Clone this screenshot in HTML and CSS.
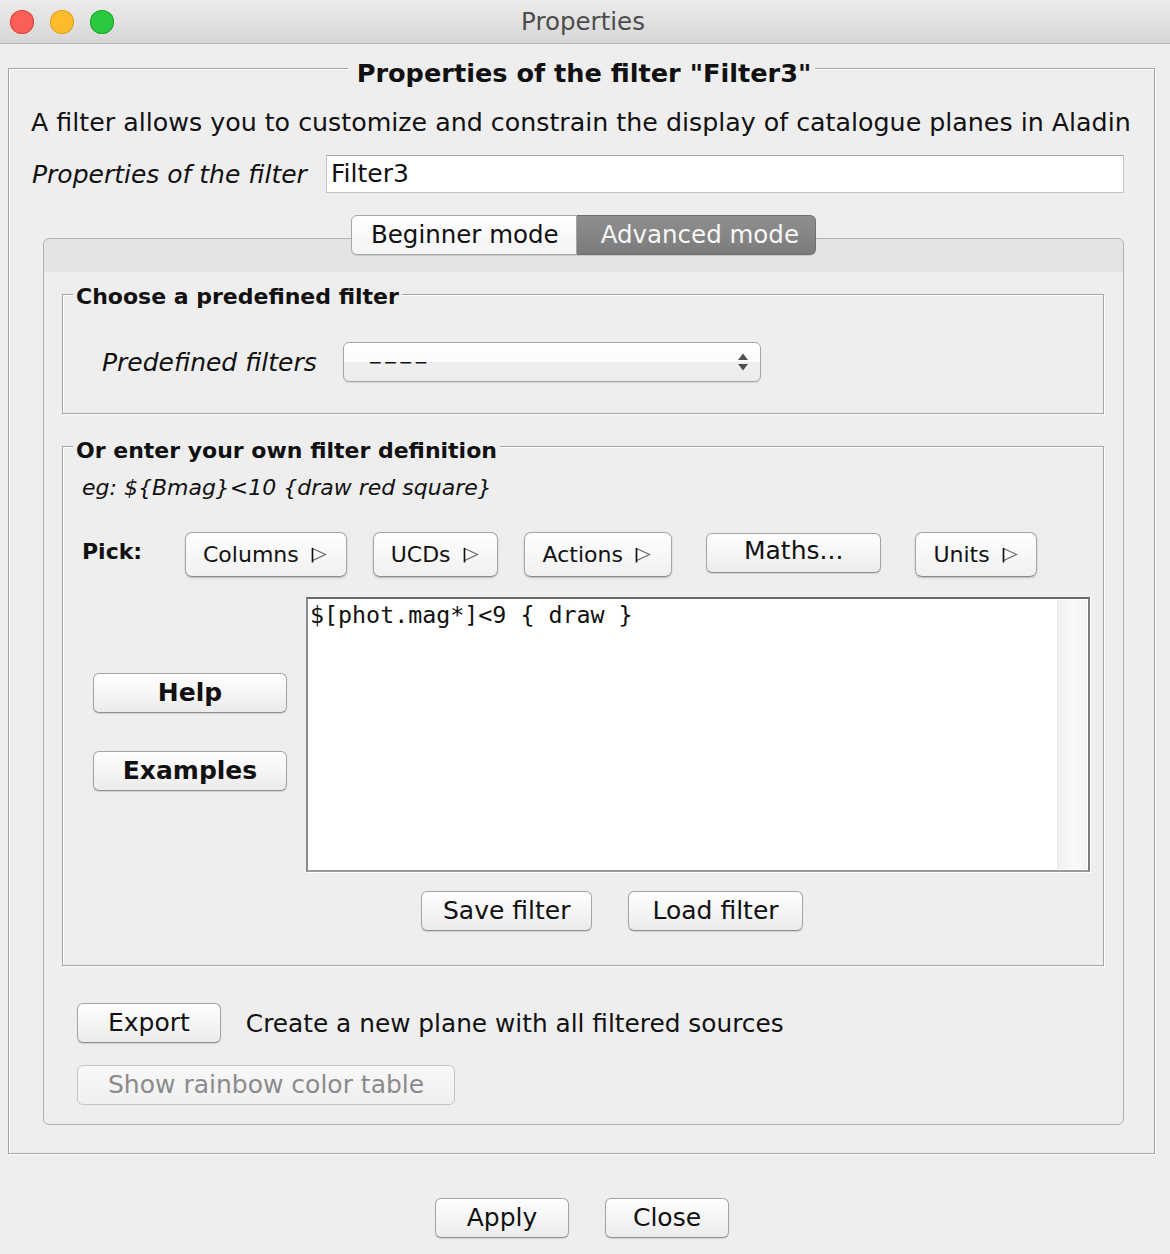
FILE: index.html
```html
<!DOCTYPE html>
<html>
<head>
<meta charset="utf-8">
<title>Properties</title>
<link rel="stylesheet" href="styles.css">
</head>
<body>
<header class="titlebar">
  <div class="lights"><span class="light red"></span><span class="light yellow"></span><span class="light green"></span></div>
  <div class="wintitle">Properties</div>
  <div></div>
</header>

<section class="frame">
  <h1 class="frame-title">Properties of the filter "Filter3"</h1>
  <div class="frame-body">
    <p class="desc">A filter allows you to customize and constrain the display of catalogue planes in Aladin</p>
    <div class="name-row">
      <span class="name-label">Properties of the filter</span>
      <div class="textfield">Filter3</div>
    </div>

    <div class="tabpane">
      <div class="tabs">
        <span class="tab tab-first">Beginner mode</span>
        <span class="tab tab-active">Advanced mode</span>
      </div>
      <div class="panel">
        <div class="group g1">
          <h2 class="group-title t1">Choose a predefined filter</h2>
          <div class="predef-row">
            <span class="predef-label">Predefined filters</span>
            <div class="combo">
              <span class="combo-value">−−−−</span>
              <svg class="combo-arrows" width="12" height="24" viewBox="0 0 12 24"><path d="M6 3.5 L11 10 L1 10 Z" fill="#4f4f4f"/><path d="M6 20.5 L11 14 L1 14 Z" fill="#4f4f4f"/></svg>
            </div>
          </div>
        </div>

        <div class="group g2">
          <h2 class="group-title t2">Or enter your own filter definition</h2>
          <div class="eg">eg: ${Bmag}&lt;10 {draw red square}</div>
          <div class="pick-row">
            <span class="pick-label">Pick:</span>
            <button class="pbtn columns">Columns <svg class="tri" width="18" height="17" viewBox="0 0 18 17"><path d="M2.5 2.5 L15.5 8.5 L2.5 14.5 Z" fill="#fdfdfd" stroke="#6a6a6a" stroke-width="1.2"/><path d="M2.5 2 L2.5 16.5" stroke="#111" stroke-width="1.6"/></svg></button>
            <button class="pbtn">UCDs <svg class="tri" width="18" height="17" viewBox="0 0 18 17"><path d="M2.5 2.5 L15.5 8.5 L2.5 14.5 Z" fill="#fdfdfd" stroke="#6a6a6a" stroke-width="1.2"/><path d="M2.5 2 L2.5 16.5" stroke="#111" stroke-width="1.6"/></svg></button>
            <button class="pbtn actions">Actions <svg class="tri" width="18" height="17" viewBox="0 0 18 17"><path d="M2.5 2.5 L15.5 8.5 L2.5 14.5 Z" fill="#fdfdfd" stroke="#6a6a6a" stroke-width="1.2"/><path d="M2.5 2 L2.5 16.5" stroke="#111" stroke-width="1.6"/></svg></button>
            <button class="btn maths">Maths...</button>
            <button class="pbtn units">Units <svg class="tri" width="18" height="17" viewBox="0 0 18 17"><path d="M2.5 2.5 L15.5 8.5 L2.5 14.5 Z" fill="#fdfdfd" stroke="#6a6a6a" stroke-width="1.2"/><path d="M2.5 2 L2.5 16.5" stroke="#111" stroke-width="1.6"/></svg></button>
          </div>
          <div class="edit-row">
            <div class="side">
              <button class="btn bold">Help</button>
              <button class="btn bold">Examples</button>
            </div>
            <div class="editor">
              <div class="code">$[phot.mag*]&lt;9 { draw }</div>
              <div class="scroll"></div>
            </div>
          </div>
          <div class="io-row">
            <button class="btn io">Save filter</button>
            <button class="btn io load">Load filter</button>
          </div>
        </div>

        <div class="export-row">
          <button class="btn export">Export</button>
          <span class="export-text">Create a new plane with all filtered sources</span>
        </div>
        <button class="btn rainbow" disabled>Show rainbow color table</button>
      </div>
    </div>
  </div>
</section>

<div class="dialog-buttons">
  <button class="btn apply">Apply</button>
  <button class="btn close">Close</button>
</div>
</body>
</html>
```

FILE: styles.css
```css
* { box-sizing: border-box; }
html, body { margin: 0; padding: 0; }
body {
  width: 1170px;
  height: 1254px;
  overflow: hidden;
  background: #eeeeee;
  font-family: "DejaVu Sans", "Liberation Sans", sans-serif;
  font-size: 25px;
  color: #111111;
}

/* title bar */
.titlebar {
  height: 44px;
  display: grid;
  grid-template-columns: 1fr auto 1fr;
  align-items: center;
  background: linear-gradient(#ececec, #d6d6d6);
  border-bottom: 1px solid #b4b4b4;
}
.lights { display: flex; gap: 16px; padding-left: 10px; }
.light { width: 24px; height: 24px; border-radius: 50%; display: block; }
.red { background: #fc5f57; box-shadow: inset 0 0 0 1px #e0443e; }
.yellow { background: #fdbc2e; box-shadow: inset 0 0 0 1px #dea123; }
.green { background: #2bc840; box-shadow: inset 0 0 0 1px #1fa52e; }
.wintitle { font-size: 24.5px; color: #4d4d4d; padding-right: 4px; }

/* outer titled frame */
.frame {
  margin: 24px 0 0 8px;
  width: 1147px;
  border: 1px solid #a4a4a4;
  box-shadow: inset 1px 1px 0 #ffffff, 1px 1px 0 #ffffff;
}
.frame-title {
  display: table;
  margin: -11px auto 0;
  padding: 0 4px 0 9px;
  background: #eeeeee;
  font-size: 25.6px;
  font-weight: bold;
  line-height: 30px;
}
.frame-body { padding: 0 30px 28px 22px; }
.desc { margin: 18px 0 0; line-height: 34px; white-space: nowrap; font-size: 25.3px; }

.name-row { display: flex; align-items: center; margin-top: 15px; height: 38px; }
.name-label { flex: 0 0 295px; font-style: italic; padding-left: 1px; }
.textfield {
  flex: 1;
  height: 38px;
  background: #ffffff;
  border: 1px solid #c4c4c4;
  border-top-color: #a8a8a8;
  padding-left: 4px;
  line-height: 36px;
}

/* tabbed pane */
.tabpane { margin: 22px 0 0 12px; }
.tabs { display: flex; justify-content: center; height: 40px; position: relative; z-index: 1; }
.tab {
  height: 40px;
  line-height: 38px;
  font-size: 24.5px;
  padding: 0 17px 0 19px;
  border: 1px solid #a6a6a6;
  background: linear-gradient(#ffffff, #f3f3f3);
  box-shadow: 0 1px 1px rgba(0,0,0,0.12);
}
.tab-first { border-radius: 6px 0 0 6px; }
.tab-active {
  border-color: #6e6e6e;
  border-left: none;
  border-radius: 0 6px 6px 0;
  background: linear-gradient(#8f8f8f, #7b7b7b);
  color: #f7f7f7;
  padding: 0 16px 0 24px;
}
.panel {
  margin-top: -17px;
  border: 1px solid #b2b2b2;
  border-radius: 6px;
  background: linear-gradient(#e4e4e4 0, #e4e4e4 33px, #eeeeee 33px);
  padding: 55px 19px 19px 18px;
}

/* titled groups */
.group {
  border: 1px solid #a4a4a4;
  box-shadow: inset 1px 1px 0 #ffffff, 1px 1px 0 #ffffff;
}
.group-title {
  display: table;
  margin: -11px 0 0 10px;
  padding: 0 3px;
  background: #eeeeee;
  font-size: 22px;
  font-weight: bold;
  line-height: 26px;
}
.t2 { margin: -9px 0 0 -9px; }

.predef-row { display: flex; align-items: center; height: 40px; margin: 32px 0 31px 39px; }
.predef-label { flex: 0 0 241px; font-style: italic; }
.combo {
  width: 418px;
  height: 40px;
  border: 1px solid #a5a5a5;
  border-radius: 6px;
  background: linear-gradient(#ffffff 0, #fcfcfc 50%, #efefef 50%, #ececec 100%);
  box-shadow: 0 1px 1px rgba(0,0,0,0.1);
  display: flex;
  align-items: center;
  justify-content: space-between;
  padding: 0 11px 0 24px;
}
.combo-value { font-size: 17px; letter-spacing: 1px; }
.combo-arrows { display: block; }

.g2 { margin-top: 32px; padding: 0 13px 34px 19px; }
.eg { margin-top: 9px; font-style: italic; font-size: 22px; line-height: 30px; }

.pick-row { display: flex; align-items: flex-start; gap: 26px; margin-top: 29px; }
.pick-label { flex: 0 0 77px; font-weight: bold; font-size: 22px; line-height: 40px; }

button { font: inherit; color: inherit; margin: 0; }

.pbtn {
  height: 45px;
  display: flex;
  align-items: center;
  gap: 11px;
  padding: 0 17px;
  font-size: 22px;
  border: 1px solid #a6a6a6;
  border-bottom-color: #8a8a8a;
  border-radius: 7px;
  background: linear-gradient(#ffffff, #f0f0f0);
  box-shadow: 0 1px 2px rgba(0,0,0,0.22);
}
.columns { padding: 0 18px 0 17px; }
.actions { padding: 0 19px 0 18px; }
.tri { display: block; }
.units { margin-left: 8px; }

.btn {
  height: 40px;
  padding: 0 20px;
  font-size: 25px;
  line-height: 38px;
  color: #111111;
  border: 1px solid #a4a4a4;
  border-bottom-color: #909090;
  border-radius: 6px;
  background: linear-gradient(#fefefe, #f5f5f5 50%, #ebebeb);
  box-shadow: 0 1px 1px rgba(0,0,0,0.12);
  white-space: nowrap;
}
.bold { font-weight: bold; }
.maths { margin: 1px 0 0 8px; padding: 0 37px 5px; line-height: 33px; }

.edit-row { display: flex; height: 275px; margin-top: 20px; }
.side {
  flex: 0 0 194px;
  margin-left: 11px;
  display: flex;
  flex-direction: column;
  justify-content: center;
  gap: 38px;
  padding-bottom: 5px;
}
.editor {
  flex: 1;
  margin-left: 19px;
  display: flex;
  background: #ffffff;
  border: 2px solid #8a8a8a;
  border-top-color: #6a6a6a;
  border-right-color: #7a7a7a;
  border-bottom-color: #9a9a9a;
  box-shadow: 1px 1px 0 #ffffff;
}
.code {
  flex: 1;
  font-family: "DejaVu Sans Mono", "Liberation Mono", monospace;
  font-size: 23.3px;
  line-height: 30px;
  padding: 1px 2px;
  white-space: pre;
}
.scroll {
  width: 30px;
  margin: 1px 1px 1px 0;
  background: linear-gradient(90deg, #e3e3e3 0, #f1f1f1 2px, #fafafa 55%, #f2f2f2 100%);
}

.io-row { display: flex; gap: 36px; margin: 19px 0 0 339px; }
.io { padding: 0 21px; }
.load { padding: 0 23px; }

.export-row { display: flex; align-items: center; gap: 25px; margin: 37px 0 0 15px; }
.export { padding: 0 30px; }
.export-text { font-size: 24.8px; }
.rainbow {
  display: block;
  margin: 22px 0 0 15px;
  padding: 0 30px;
  color: #8b8b8b;
  border-color: #c4c4c4;
  background: linear-gradient(#f8f8f8, #f0f0f0);
  box-shadow: none;
}

.dialog-buttons { display: flex; justify-content: center; gap: 36px; margin-top: 44px; padding-right: 6px; }
.apply { width: 134px; padding: 0; }
.close { width: 124px; padding: 0; }
```
